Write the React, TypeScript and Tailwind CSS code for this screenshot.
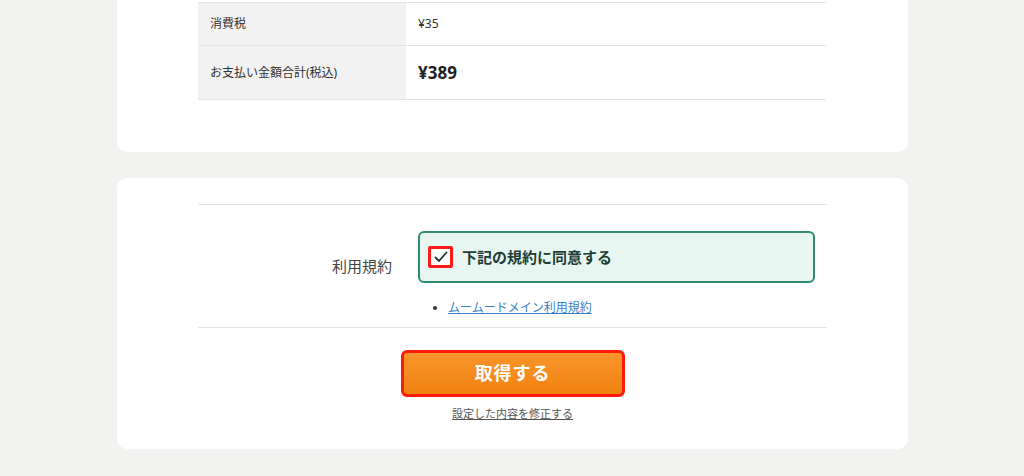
import React from 'react';

const font = { fontFamily: '"Noto Sans", "Noto Sans CJK JP", sans-serif' };

function CheckIcon() {
  return (
    <svg width="14" height="12" viewBox="0 0 14 12" fill="none">
      <path d="M1.5 6.5 L5 10 L12.5 1.5" stroke="#1f3b33" strokeWidth="1.8" strokeLinecap="round" strokeLinejoin="round" />
    </svg>
  );
}

export default function App() {
  return (
    <div className="min-h-[476px] bg-[#f2f2f0] text-[#333]" style={font}>
      <div className="w-[791px] ml-[117px]">
        {/* price summary card */}
        <section className="bg-white rounded-b-[10px] pt-[2px] pb-[52px] px-[81px]">
          <table className="w-[628px] border-collapse">
            <tbody>
              <tr className="border-t border-b border-[#e3e3e3]">
                <th className="w-[208px] h-[43px] bg-[#f2f2f2] text-left font-normal text-[12px] pl-3">消費税</th>
                <td className="text-[12px] pl-3">¥35</td>
              </tr>
              <tr className="border-b border-[#e3e3e3]">
                <th className="w-[208px] h-[54px] bg-[#f2f2f2] text-left font-normal text-[12px] pl-3">お支払い金額合計(税込)</th>
                <td className="text-[17px] font-bold pl-3 text-[#222]">¥389</td>
              </tr>
            </tbody>
          </table>
        </section>

        {/* terms card */}
        <section className="mt-[26px] bg-white rounded-[10px] pt-[26px] pb-[26px] px-[81px]">
          <div className="border-t border-b border-[#e3e3e3] flex">
            <div className="w-[208px] flex items-center justify-end pr-[14px] text-[15px] text-[#444]">利用規約</div>
            <div className="flex-1 pl-3 pr-3 pt-[26px] pb-[10px]">
              <label className="h-[52px] flex items-center gap-[9px] pl-[8px] border-2 border-[#2f8a72] rounded-[6px] bg-[#e8f6f2]">
                <span className="w-[25px] h-[22px] border-[3px] border-[#ff1a1a] rounded-[2px] flex items-center justify-center bg-white">
                  <CheckIcon />
                </span>
                <span className="text-[15px] font-bold text-[#1d3f35]">下記の規約に同意する</span>
              </label>
              <ul className="mt-[16px] pl-[15px] text-[12px]">
                <li className="flex items-center gap-[11px]">
                  <span className="w-[4px] h-[4px] rounded-full bg-[#333]" />
                  <a className="text-[#3b7fc4] underline">ムームードメイン利用規約</a>
                </li>
              </ul>
            </div>
          </div>
          <div className="flex flex-col items-center pt-[22px]">
            <button className="w-[224px] h-[47px] rounded-[6px] border-[3px] border-[#ff1a0a] bg-gradient-to-b from-[#f9952a] to-[#f1830f] text-white text-[18px] font-bold tracking-wider">
              取得する
            </button>
            <a className="mt-[9px] text-[11px] text-[#555] underline">設定した内容を修正する</a>
          </div>
        </section>
      </div>
    </div>
  );
}
